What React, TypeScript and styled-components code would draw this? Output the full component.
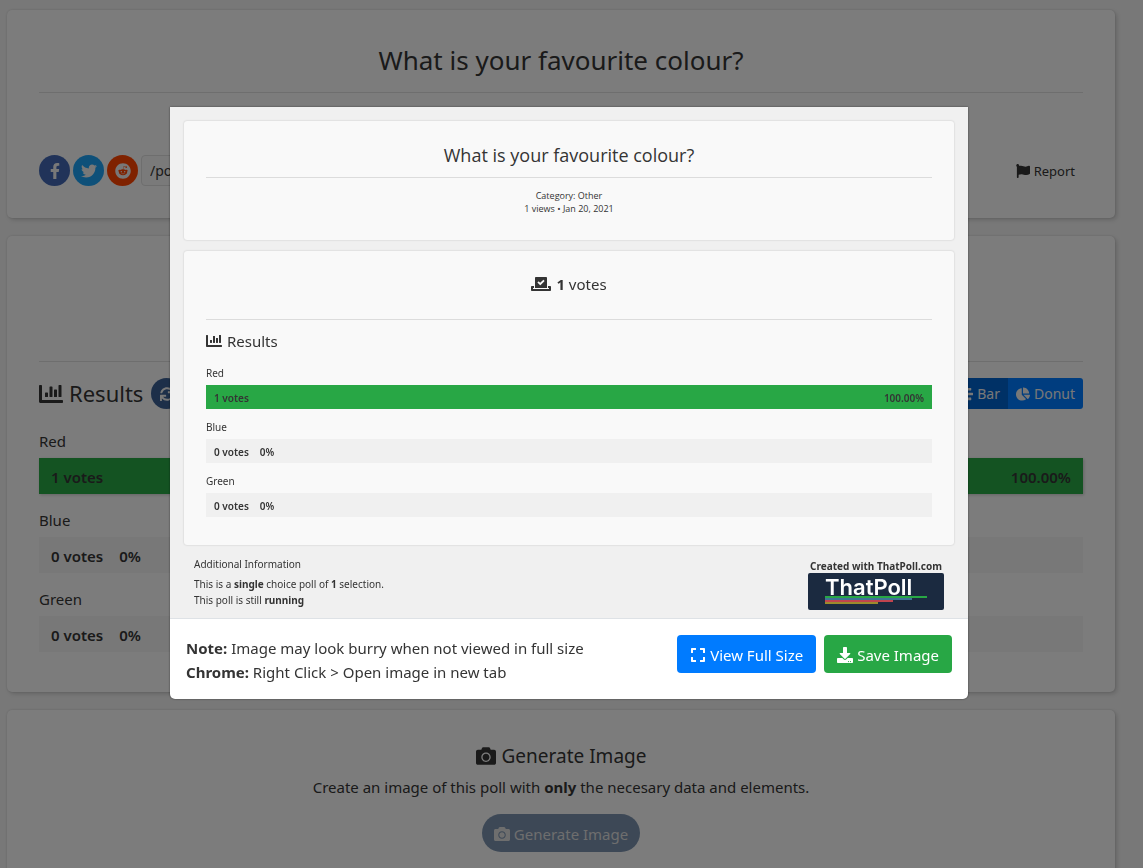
import React from "react";
import styled, { createGlobalStyle } from "styled-components";
import {
  FaCamera,
  FaChartBar,
  FaChartPie,
  FaDownload,
  FaExpand,
  FaFacebookF,
  FaFlag,
  FaReddit,
  FaStream,
  FaSync,
  FaTwitter,
  FaVoteYea,
} from "react-icons/fa";

const GlobalStyle = createGlobalStyle`
  *, *::before, *::after { box-sizing: border-box; }
  body {
    margin: 0;
    overflow: hidden;
    background: #f0f0f0;
    color: #343434;
    font-family: "Noto Sans", "Open Sans", sans-serif;
    font-size: 15px;
    line-height: 24px;
  }
  h1, h2, h3, p { margin: 0; font-weight: 400; }
  button, input { font: inherit; }
  svg { flex: none; display: block; }
`;

const Page = styled.main`
  display: flex;
  flex-direction: column;
  gap: 18px;
  padding: 10px 28px 16px 7px;
`;

const Card = styled.section`
  display: flex;
  flex-direction: column;
  padding: 32px;
  background: #f9f9f9;
  border-radius: 5px;
  box-shadow: 0 0 2px rgba(0, 0, 0, 0.15), 2px 2px 4px rgba(0, 0, 0, 0.15);
`;

const PollTitle = styled.h1`
  font-size: 26px;
  line-height: 36px;
  text-align: center;
`;

const Rule = styled.hr<{ $above?: number; $below?: number }>`
  width: 100%;
  border: 0;
  border-top: 1px solid #dcdcdc;
  margin: ${(p) => p.$above ?? 0}px 0 ${(p) => p.$below ?? 0}px;
`;

const ShareRow = styled.div`
  display: flex;
  align-items: center;
  gap: 3px;
`;

const RoundButton = styled.button<{ $color: string }>`
  display: flex;
  align-items: center;
  justify-content: center;
  width: 31px;
  height: 31px;
  padding: 0;
  border: 0;
  border-radius: 50%;
  background: ${(p) => p.$color};
  color: #f0f0f0;
  font-size: 16px;
`;

const LinkInput = styled.input`
  width: 240px;
  height: 31px;
  padding: 4px 8px;
  border: 1px solid #dcdcdc;
  border-radius: 4px;
  background: #f4f4f4;
  color: #343434;
  font-size: 14px;
`;

const ReportButton = styled.button`
  display: flex;
  align-items: center;
  gap: 4px;
  height: 31px;
  margin-left: auto;
  padding: 0 8px;
  border: 0;
  background: none;
  color: #343434;
  font-size: 13px;
`;

const VoteArea = styled.div`
  height: 93px;
`;

const ResultsHead = styled.div`
  display: flex;
  align-items: center;
  gap: 8px;
`;

const ResultsTitle = styled.h2`
  display: flex;
  align-items: center;
  gap: 6px;
  font-size: 22px;
  line-height: 31px;
`;

const ToggleGroup = styled.div`
  display: flex;
  margin-left: auto;
  border-radius: 3px;
  overflow: hidden;
`;

const Toggle = styled.button<{ $active?: boolean }>`
  display: flex;
  align-items: center;
  gap: 4px;
  height: 31px;
  padding: 0 8px;
  border: 0;
  background: ${(p) => (p.$active ? "#0062cc" : "#007bff")};
  color: #f0f0f0;
  font-size: 14px;
`;

const OptionList = styled.div`
  display: flex;
  flex-direction: column;
  gap: 14px;
  padding-top: 20px;
  padding-bottom: 8px;
`;

const Option = styled.div`
  display: flex;
  flex-direction: column;
  gap: 5px;
`;

const Bar = styled.div<{ $won?: boolean }>`
  display: flex;
  align-items: center;
  justify-content: ${(p) => (p.$won ? "space-between" : "flex-start")};
  gap: 16px;
  height: 36px;
  padding: 1px 12px 0;
  background: ${(p) => (p.$won ? "#28a745" : "#f0f0f0")};
  box-shadow: ${(p) => (p.$won ? "1px 1px 3px rgba(0, 0, 0, 0.2)" : "none")};
  font-weight: 600;
`;

const GenerateCard = styled(Card)`
  align-items: center;
`;

const GenerateTitle = styled.h2`
  display: flex;
  align-items: center;
  gap: 6px;
  font-size: 19px;
  line-height: 28px;
`;

const GenerateText = styled.p`
  padding: 5px 0 15px;
`;

const GenerateButton = styled.button`
  display: flex;
  align-items: center;
  gap: 4px;
  height: 38px;
  padding: 2px 12px 0;
  border: 0;
  border-radius: 19px;
  background: #7a91ad;
  color: #dcdcdc;
`;

const Backdrop = styled.div`
  position: fixed;
  inset: 0;
  display: flex;
  align-items: flex-start;
  justify-content: center;
  padding: 107px 5px 0 0;
  background: rgba(0, 0, 0, 0.5);
`;

const Dialog = styled.div`
  width: 100%;
  max-width: 798px;
  overflow: hidden;
  border-radius: 0 0 5px 5px;
  background: #fff;
  box-shadow: 0 0 2px rgba(0, 0, 0, 0.6);
`;

const Preview = styled.div`
  display: flex;
  flex-direction: column;
  gap: 11px;
  padding: 14px 14px 8px;
  background: #f0f0f0;
  border-bottom: 1px solid #dee2e6;
  font-size: 10px;
  line-height: 16px;
`;

const PreviewCard = styled.section`
  display: flex;
  flex-direction: column;
  padding: 22px 22px 25px;
  border-radius: 3px;
  background: #f9f9f9;
  box-shadow: 0 0 2px rgba(0, 0, 0, 0.2);
`;

const PreviewTitle = styled.h2`
  font-family: "Open Sans", sans-serif;
  font-size: 18px;
  line-height: 24px;
  text-align: center;
`;

const PreviewMeta = styled.p`
  font-family: "Open Sans", sans-serif;
  font-size: 9px;
  line-height: 13px;
  text-align: center;
`;

const VoteCount = styled.p`
  display: flex;
  align-items: center;
  justify-content: center;
  gap: 5px;
  font-size: 15px;
  line-height: 22px;
`;

const PreviewResults = styled.h3`
  display: flex;
  align-items: center;
  gap: 5px;
  font-size: 15px;
  line-height: 24px;
`;

const PreviewOptions = styled.div`
  display: flex;
  flex-direction: column;
  gap: 10px;
  padding: 12px 0 3px;
`;

const PreviewOption = styled.div`
  display: flex;
  flex-direction: column;
  gap: 4px;
`;

const PreviewBar = styled(Bar)`
  gap: 11px;
  height: 24px;
  padding: 1px 8px 0;
  box-shadow: none;
`;

const PreviewFoot = styled.div`
  display: flex;
  align-items: flex-start;
  justify-content: space-between;
  padding: 0 10px;
`;

const InfoTitle = styled.p`
  padding-bottom: 4px;
`;

const Brand = styled.div`
  display: flex;
  flex-direction: column;
  align-items: center;
  width: 136px;
  padding-top: 3px;
  font-weight: 700;
  line-height: 14px;
  white-space: nowrap;
`;

const Logo = styled.svg`
  width: 136px;
  height: 37px;
`;

const DialogFoot = styled.div`
  display: flex;
  align-items: flex-start;
  justify-content: space-between;
  padding: 16px 16px 14px;
`;

const NoteText = styled.p`
  padding: 1px 0;
`;

const Actions = styled.div`
  display: flex;
  gap: 8px;
`;

const Action = styled.button<{ $color: string }>`
  display: flex;
  align-items: center;
  gap: 4px;
  height: 38px;
  padding: 2px 13px 0;
  border: 0;
  border-radius: 4px;
  background: ${(p) => p.$color};
  color: #fff;
`;

const options = [
  { name: "Red", votes: 1, share: "100.00%" },
  { name: "Blue", votes: 0, share: "0%" },
  { name: "Green", votes: 0, share: "0%" },
];

function ThatPollLogo() {
  return (
    <Logo viewBox="0 0 136 37" role="img" aria-label="ThatPoll">
      <rect width="136" height="37" rx="2" fill="#1b2a40" />
      <text x="17" y="22" fill="#fff" fontFamily="Inter, sans-serif" fontSize="22" fontWeight="600">
        ThatPoll
      </text>
      <rect x="17" y="23" width="102" height="2" fill="#28a745" />
      <rect x="17" y="25" width="87" height="2" fill="#3f7396" />
      <rect x="17" y="27" width="68" height="2" fill="#c0444e" />
      <rect x="17" y="29" width="53" height="2" fill="#9c8a2c" />
    </Logo>
  );
}

export default function App() {
  return (
    <>
      <GlobalStyle />
      <Page>
        <Card>
          <PollTitle>What is your favourite colour?</PollTitle>
          <Rule $above={14} $below={62} />
          <ShareRow>
            <RoundButton $color="#4267b2" aria-label="Share on Facebook"><FaFacebookF /></RoundButton>
            <RoundButton $color="#1da1f2" aria-label="Share on Twitter"><FaTwitter /></RoundButton>
            <RoundButton $color="#ff4500" aria-label="Share on Reddit"><FaReddit /></RoundButton>
            <LinkInput readOnly aria-label="Poll link" value="/poll" />
            <ReportButton><FaFlag size={14} />Report</ReportButton>
          </ShareRow>
        </Card>

        <Card>
          <VoteArea />
          <Rule $below={16} />
          <ResultsHead>
            <ResultsTitle><FaChartBar size={24} />Results</ResultsTitle>
            <RoundButton $color="#3b5f92" aria-label="Refresh results"><FaSync size={14} /></RoundButton>
            <ToggleGroup>
              <Toggle $active><FaStream size={14} />Bar</Toggle>
              <Toggle><FaChartPie size={14} />Donut</Toggle>
            </ToggleGroup>
          </ResultsHead>
          <OptionList>
            {options.map((o) => (
              <Option key={o.name}>
                <span>{o.name}</span>
                <Bar $won={o.votes > 0}>
                  <span>{o.votes} votes</span>
                  <span>{o.share}</span>
                </Bar>
              </Option>
            ))}
          </OptionList>
        </Card>

        <GenerateCard>
          <GenerateTitle><FaCamera size={20} />Generate Image</GenerateTitle>
          <GenerateText>
            Create an image of this poll with <b>only</b> the necesary data and elements.
          </GenerateText>
          <GenerateButton><FaCamera size={16} />Generate Image</GenerateButton>
        </GenerateCard>
      </Page>

      <Backdrop>
        <Dialog role="dialog" aria-modal="true" aria-label="Generated image">
          <Preview>
            <PreviewCard>
              <PreviewTitle>What is your favourite colour?</PreviewTitle>
              <Rule $above={10} $below={11} />
              <PreviewMeta>Category: Other</PreviewMeta>
              <PreviewMeta>1 views • Jan 20, 2021</PreviewMeta>
            </PreviewCard>
            <PreviewCard>
              <VoteCount><FaVoteYea size={20} /><span><b>1</b> votes</span></VoteCount>
              <Rule $above={24} $below={9} />
              <PreviewResults><FaChartBar size={16} />Results</PreviewResults>
              <PreviewOptions>
                {options.map((o) => (
                  <PreviewOption key={o.name}>
                    <span>{o.name}</span>
                    <PreviewBar $won={o.votes > 0}>
                      <span>{o.votes} votes</span>
                      <span>{o.share}</span>
                    </PreviewBar>
                  </PreviewOption>
                ))}
              </PreviewOptions>
            </PreviewCard>
            <PreviewFoot>
              <div>
                <InfoTitle>Additional Information</InfoTitle>
                <p>This is a <b>single</b> choice poll of <b>1</b> selection.</p>
                <p>This poll is still <b>running</b></p>
              </div>
              <Brand>
                <span>Created with ThatPoll.com</span>
                <ThatPollLogo />
              </Brand>
            </PreviewFoot>
          </Preview>
          <DialogFoot>
            <NoteText>
              <b>Note:</b> Image may look burry when not viewed in full size
              <br />
              <b>Chrome:</b> Right Click &gt; Open image in new tab
            </NoteText>
            <Actions>
              <Action $color="#007bff"><FaExpand size={16} />View Full Size</Action>
              <Action $color="#28a745"><FaDownload size={16} />Save Image</Action>
            </Actions>
          </DialogFoot>
        </Dialog>
      </Backdrop>
    </>
  );
}
